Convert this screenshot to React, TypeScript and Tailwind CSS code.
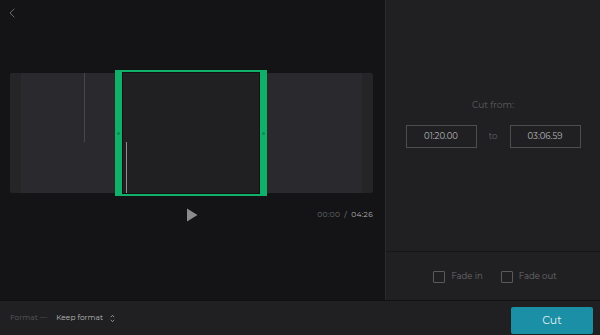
import { ChevronLeft } from "lucide-react";

const font = { fontFamily: "Montserrat, 'Noto Sans', 'Open Sans', sans-serif" };

function Timeline() {
  return (
    <div className="relative ml-[10px] mr-[12px] mt-[47px] h-[120px] rounded-[3px] bg-[#2a2a2e] flex">
      <div className="w-[11px] rounded-l-[3px] bg-[#252528]" />
      <div className="flex-1" />
      <div className="w-[11px] rounded-r-[3px] bg-[#252528]" />

      {/* thumbnail divider */}
      <div className="absolute left-[74px] top-0 h-[69px] w-px bg-[#47474b]" />

      {/* selection */}
      <div className="absolute left-[105px] top-[-3px] flex h-[126px] w-[152px] bg-[#10b06a]">
        <div className="flex w-[7px] items-center justify-center">
          <div className="h-[3px] w-[3px] rounded-full bg-[#0c8a52]" />
        </div>
        <div className="my-[2px] flex-1 border border-[#111113] bg-[#202022]" />
        <div className="flex w-[7px] items-center justify-center">
          <div className="h-[3px] w-[3px] rounded-full bg-[#0c8a52]" />
        </div>
      </div>

      {/* playhead */}
      <div className="absolute left-[116px] top-[69px] h-[51px] w-px bg-[#8d8d90]" />
    </div>
  );
}

export default function App() {
  return (
    <div className="flex h-[335px] w-[600px] flex-col overflow-hidden bg-[#141416]" style={font}>
      <div className="flex flex-1">
        {/* Left: preview + timeline */}
        <div className="flex w-[385px] flex-col">
          <div className="h-[26px] pl-[4px] pt-[5px] text-[#8a8a8e]">
            <ChevronLeft size={16} strokeWidth={1.1} />
          </div>
          <Timeline />
          <div className="mt-[12px] flex h-[20px] items-center pl-[12px] pr-[12px]">
            <div className="ml-[174px]">
              <svg width="12" height="14" viewBox="0 0 12 14">
                <path d="M1 0.5 L11.5 7 L1 13.5 Z" fill="#8c8c8f" />
              </svg>
            </div>
            <div className="ml-auto text-[7.5px] tracking-[0.3px]">
              <span className="text-[#6b6b6e]">00:00</span>
              <span className="mx-[4px] text-[#8a8a8d]">/</span>
              <span className="text-[#b3b3b6]">04:26</span>
            </div>
          </div>
        </div>

        {/* Right: settings */}
        <div className="flex flex-1 flex-col border-l border-[#2a2a2c] bg-[#202022]">
          <div className="flex h-[252px] flex-col items-center border-b border-[#161618] pt-[98px]">
            <div className="text-[9px] text-[#5e5e61]">Cut from:</div>
            <div className="mt-[13px] flex items-center">
              <div className="flex h-[23px] w-[71px] items-center justify-center border border-[#4d4d50] text-[8.5px] text-[#b8b8bb]">
                01:20.00
              </div>
              <div className="w-[33px] text-center text-[8.5px] text-[#606063]">to</div>
              <div className="flex h-[23px] w-[71px] items-center justify-center border border-[#4d4d50] text-[8.5px] text-[#b8b8bb]">
                03:06.59
              </div>
            </div>
          </div>
          <div className="flex flex-1 items-center justify-center gap-[18px] pt-[1px] pl-[4px]">
            <label className="flex items-center gap-[6px] text-[8.5px] text-[#6c6c6f]">
              <span className="h-[12px] w-[12px] rounded-[1px] border border-[#5a5a5d]" />
              Fade in
            </label>
            <label className="flex items-center gap-[6px] text-[8.5px] text-[#6c6c6f]">
              <span className="h-[12px] w-[12px] rounded-[1px] border border-[#5a5a5d]" />
              Fade out
            </label>
          </div>
        </div>
      </div>

      {/* Bottom bar */}
      <div className="flex h-[35px] items-center border-t border-[#111113] bg-[#202022] pl-[10px] pr-[7px]">
        <span className="text-[7.5px] text-[#5a5a5d]">Format —</span>
        <span className="ml-[9px] text-[7.5px] text-[#b8b8bb]">Keep format</span>
        <svg className="ml-[7px]" width="5" height="9" viewBox="0 0 5 9">
          <path d="M0.8 3.2 L2.5 1.3 L4.2 3.2 M0.8 5.8 L2.5 7.7 L4.2 5.8" stroke="#9a9a9d" strokeWidth="0.9" fill="none" />
        </svg>
        <button className="ml-auto mt-[5px] h-[27px] w-[82px] rounded-[2px] bg-[#1a8fa6] text-[11px] text-[#e4eef0]">
          Cut
        </button>
      </div>
    </div>
  );
}
